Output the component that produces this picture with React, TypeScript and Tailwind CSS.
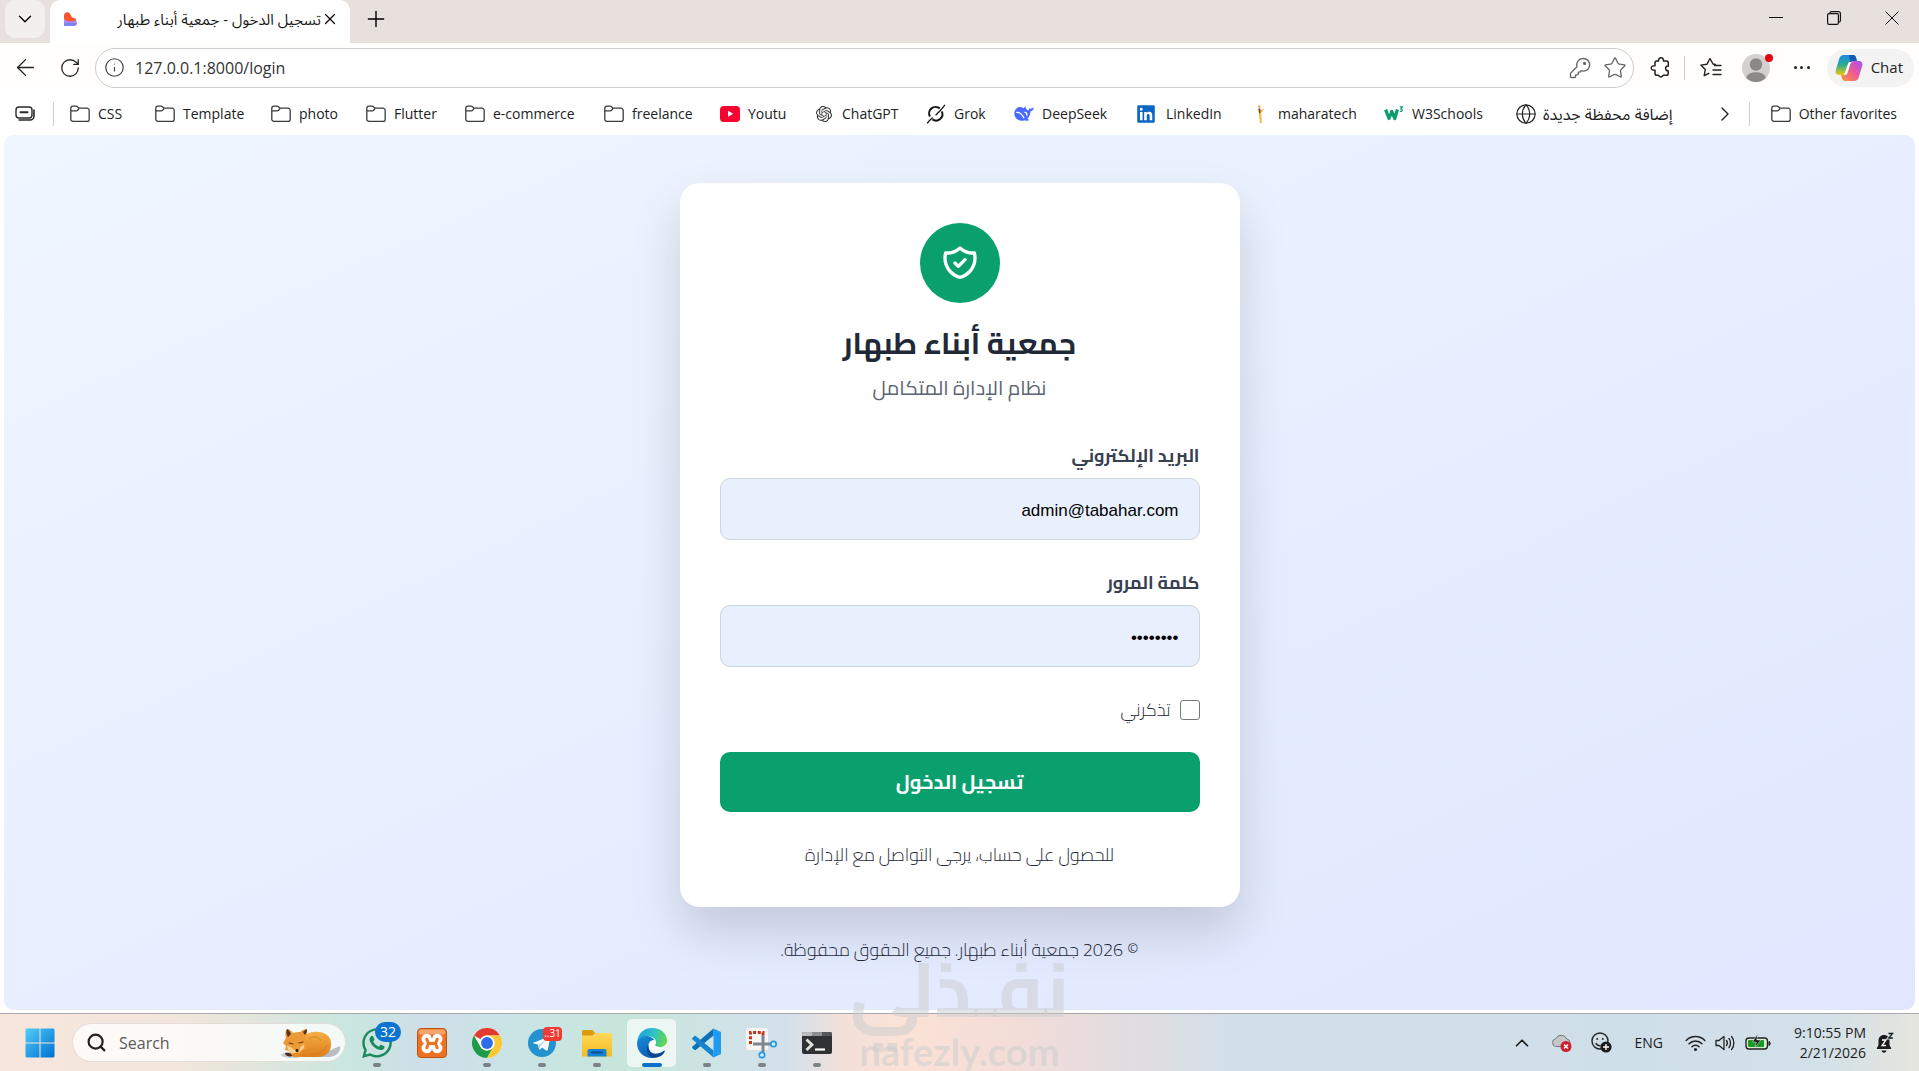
import type { ReactNode } from "react";
import {
  LuArrowLeft,
  LuChevronDown,
  LuChevronRight,
  LuChevronUp,
  LuGlobe,
  LuInfo,
  LuPlus,
  LuRotateCw,
  LuSearch,
  LuStar,
  LuX,
} from "react-icons/lu";
import { SiOpenai } from "react-icons/si";
import { FaLinkedin, FaWhatsapp } from "react-icons/fa";

const UI = "font-['Open_Sans','Noto_Sans_Arabic',sans-serif]";
const CAIRO = "font-['Cairo','Noto_Sans_Arabic',sans-serif]";

/* ---------- bookmark icons ---------- */

function Folder() {
  return (
    <svg width="20" height="20" viewBox="0 0 20 20" fill="none" stroke="#3a3a3a" strokeWidth="1.3" strokeLinejoin="round">
      <path d="M.8 4.2A2 2 0 0 1 2.8 2.2h3.3c.5 0 1 .2 1.4.6L9 4.2h8a2.2 2.2 0 0 1 2.2 2.2v8.8a2.2 2.2 0 0 1-2.2 2.2H3a2.2 2.2 0 0 1-2.2-2.2z" />
      <path d="M.8 6.8h5.4c.5 0 1-.2 1.4-.6l1.6-1.8" />
    </svg>
  );
}

function Youtube() {
  return (
    <svg width="20" height="20" viewBox="0 0 20 20">
      <rect y="2" width="20" height="16" rx="3.8" fill="#f8032f" />
      <path d="M8 6.8v6l5.2-3z" fill="#fff" />
    </svg>
  );
}

function Grok() {
  return (
    <svg width="20" height="20" viewBox="0 0 20 20" fill="none" stroke="#151515" strokeWidth="2">
      <path d="M13.8 4.6A6.4 6.4 0 0 0 4 12.6" />
      <path d="M6.4 15.4A6.4 6.4 0 0 0 15.8 7.4" />
      <path d="M19 .8c-2.6 3.4-5.2 6.8-9.4 10.4M6.6 13.4C4 15.8 2.4 17.4 1.2 19.4" strokeWidth="1.3" />
    </svg>
  );
}

function DeepSeek() {
  return (
    <svg width="20" height="20" viewBox="0 0 20 20">
      <path
        d="M.3 9.600C.2 5.500 3 2.800 6.800 3c1.200.1 2 .6 3 1.200.6-.7.9-1.200 1.900-1.600-.2 1.600.6 2.900 2 3.700 1.200.5 1.200-1.100 1.900-2.200.4.9 1.100.7 1.800.4.8-.3 1.400-.8 2.400-.9-.2 2.200-1.400 3.500-3.300 4-.2 3.400-1.200 5.400-3 7.100.5.6 1.300.9 2.100 1.400-1.900 1-3.800.9-5.200.2C5.200 18.200.4 14.800.3 9.600z"
        fill="#4d6bfe"
      />
      <path d="M2.800 8.400c3.400-.4 5.400 2.200 7 5.200M11 8.400c1.400.2 2 1.200 1.900 2.600" stroke="#fff" strokeWidth="1.300" fill="none" strokeLinecap="round" />
    </svg>
  );
}

function Mahara() {
  return (
    <svg width="20" height="20" viewBox="0 0 20 20">
      <path d="M8.600 5.800c2 .2 4-.1 5.400-1.400-.6 2-1.600 3.200-2.800 3.800l.6 10.800H10z" fill="#f2b43c" />
      <path d="M8.400 4.400h1.900v4.600H9z" fill="#6b3f1d" />
      <circle cx="9.400" cy="2.500" r="1.200" fill="#e9a13b" />
    </svg>
  );
}

function W3() {
  return (
    <svg width="20" height="20" viewBox="0 0 20 20" fill="none">
      <path d="M1.600 5.600 5 14.500l2.800-7 3 7 2.600-9" stroke="#0c9d6c" strokeWidth="3.200" strokeLinejoin="round" />
      <path d="M15.800 2.800h2.600l-1.500 2c2 .2 1.900 3-.9 2.500" stroke="#0c9d6c" strokeWidth="1.200" />
    </svg>
  );
}

type Bookmark = { label: string; width: string; icon: ReactNode };

const bookmarks: Bookmark[] = [
  { label: "CSS", width: "w-[85px]", icon: <Folder /> },
  { label: "Template", width: "w-[116px]", icon: <Folder /> },
  { label: "photo", width: "w-[95px]", icon: <Folder /> },
  { label: "Flutter", width: "w-[99px]", icon: <Folder /> },
  { label: "e-commerce", width: "w-[139px]", icon: <Folder /> },
  { label: "freelance", width: "w-[116px]", icon: <Folder /> },
  { label: "Youtu", width: "w-[94px]", icon: <Youtube /> },
  { label: "ChatGPT", width: "w-[112px]", icon: <SiOpenai className="mx-[2px] size-4 text-[#333]" /> },
  { label: "Grok", width: "w-[88px]", icon: <Grok /> },
  { label: "DeepSeek", width: "w-[122px]", icon: <DeepSeek /> },
  { label: "LinkedIn", width: "w-[114px]", icon: <FaLinkedin className="mr-[2px] size-5 text-[#0a66c2]" /> },
  { label: "maharatech", width: "w-[134px]", icon: <Mahara /> },
  { label: "W3Schools", width: "w-[131px]", icon: <W3 /> },
];

/* ---------- browser chrome ---------- */

function TabStrip() {
  return (
    <header className="flex h-[43px] items-start bg-[#e8e0dd]">
      <button aria-label="Tab actions" className="ml-[5px] flex h-[38px] w-10 items-center justify-center rounded-[10px] bg-[#f3efed]">
        <LuChevronDown className="size-[22px]" strokeWidth={1.5} />
      </button>
      <div className="ml-[5px] flex h-[43px] w-[300px] items-center rounded-t-[10px] bg-white pr-[11px] pb-[5px] pl-[13px]">
        <svg width="16" height="16" viewBox="0 0 16 16">
          <path d="M1 8.500h10.500a3.400 3.400 0 0 1 0 6.500H1z" fill="#a78bfa" />
          <path d="M1 12h13c-.5 1.800-1.500 3-3.500 3H1z" fill="#7c83f5" />
          <path d="M1 4.500A3.300 3.300 0 0 1 7.300 3.200L9 6.500c2 .3 4 1 4.600 2.800C9.500 11 3 10.500 1 8z" fill="#f9532d" />
        </svg>
        <span dir="rtl" className="flex-1 truncate text-right text-[15px] leading-6 text-[#1b1b1b]">
          تسجيل الدخول - جمعية أبناء طبهار
        </span>
        <button aria-label="Close tab">
          <LuX className="size-[18px]" strokeWidth={1.6} />
        </button>
      </div>
      <button aria-label="New tab" className="ml-3 flex h-[38px] w-7 items-center justify-center">
        <LuPlus className="size-[26px] shrink-0" strokeWidth={1.3} />
      </button>
      <div className="ml-auto flex h-[35px] items-center gap-11 pr-5">
        <button aria-label="Minimize">
          <svg width="14" height="14" viewBox="0 0 14 14" stroke="#111" fill="none">
            <path d="M0 6.500h14" />
          </svg>
        </button>
        <button aria-label="Restore">
          <svg width="14" height="14" viewBox="0 0 14 14" stroke="#111" fill="none" strokeWidth="1.200">
            <rect x=".6" y="2.600" width="10.800" height="10.800" rx="1.500" />
            <path d="M3 2.600V2A1.400 1.400 0 0 1 4.400.6h7A2 2 0 0 1 13.400 2.600v7A1.400 1.400 0 0 1 12 11" />
          </svg>
        </button>
        <button aria-label="Close">
          <svg width="14" height="14" viewBox="0 0 14 14" stroke="#111" fill="none">
            <path d="m.5.5 13 13m0-13-13 13" />
          </svg>
        </button>
      </div>
    </header>
  );
}

function Toolbar() {
  return (
    <nav className="flex h-[49px] items-center bg-[#fffefd] pr-[5px] pl-3">
      <button aria-label="Back">
        <LuArrowLeft className="size-[27px] text-[#222]" strokeWidth={1.2} />
      </button>
      <button aria-label="Reload" className="ml-5">
        <LuRotateCw className="size-[22px] text-[#222]" strokeWidth={1.4} />
      </button>
      <div className="ml-[14px] flex h-10 flex-1 items-center rounded-full border border-[#cfcccb] bg-white pr-[6px] pl-2">
        <LuInfo className="size-[21px] text-[#444]" strokeWidth={1.4} />
        <input
          aria-label="Address"
          defaultValue="127.0.0.1:8000/login"
          className="ml-[10px] min-w-0 flex-1 bg-transparent text-[16px] text-[#333] outline-none"
        />
        <button aria-label="Saved passwords">
          <svg width="22" height="22" viewBox="0 0 22 22" fill="none" stroke="#666" strokeWidth="1.300" strokeLinejoin="round">
            <path d="M14 1.500a6.300 6.300 0 0 0-6 8.300l-6 6c-.4.400-.6 1-.6 1.500v2.200c0 .6.500 1 1 1h3.200c.6 0 1-.4 1-1v-1.700h1.700c.6 0 1-.4 1-1v-1.600h1.400l1.500-1.500A6.300 6.300 0 1 0 14 1.500z" />
            <circle cx="15.600" cy="6.400" r=".9" fill="#666" />
          </svg>
        </button>
        <button aria-label="Add to favorites" className="ml-3">
          <LuStar className="size-6 text-[#666]" strokeWidth={1.3} />
        </button>
      </div>
      <button aria-label="Extensions" className="ml-4">
        <svg width="21" height="22" viewBox="0 0 21 22" fill="none" stroke="#222" strokeWidth="1.500" strokeLinejoin="round">
          <path d="M6.800 4h1.800a2.500 2.500 0 1 1 4.800 0h3.100c1 0 1.800.8 1.800 1.800v3.400c-3.600-.9-3.600 5-.1 4.600v2.700c0 1-.7 1.800-1.700 1.800h-3.300a2.500 2.500 0 0 1-4.700 0H6.800c-1 0-1.800-.8-1.800-1.800v-3.200c-5 .6-5-5.200 0-4.600V5.800C5 4.800 5.800 4 6.800 4z" />
        </svg>
      </button>
      <span className="ml-[13px] h-6 w-px bg-[#d0cdcc]" />
      <button aria-label="Favorites" className="ml-[15px]">
        <svg width="22" height="22" viewBox="0 0 22 22" fill="none" stroke="#222" strokeWidth="1.400" strokeLinejoin="round" strokeLinecap="round">
          <path d="M15.500 7.500 13 7l-3-5.500L7 7.200l-6.200.9 4.500 4.400-1.100 6.200 4.600-2.400M14.500 8.500h6.500M13 13h8M13 17.500h8" />
        </svg>
      </button>
      <button aria-label="Profile" className="relative ml-5">
        <svg width="28" height="28" viewBox="0 0 28 28">
          <circle cx="14" cy="14" r="14" fill="#d3d1d0" />
          <circle cx="14" cy="10.500" r="6.200" fill="#8b8987" />
          <path d="M4 23.700a10.500 7.800 0 0 1 20 0A14 14 0 0 1 14 28a14 14 0 0 1-10-4.300z" fill="#8b8987" />
        </svg>
        <span className="absolute top-0 -right-[3px] size-2 rounded-full bg-[#e3000f]" />
      </button>
      <button aria-label="Settings and more" className="ml-6 flex w-4 justify-between">
        <span className="size-[3px] rounded-full bg-[#222]" />
        <span className="size-[3px] rounded-full bg-[#222]" />
        <span className="size-[3px] rounded-full bg-[#222]" />
      </button>
      <button className="ml-[17px] flex h-[38px] items-center gap-2 rounded-full bg-[#f4f3f3] px-2 text-[15px] text-[#222]">
        <svg width="28" height="28" viewBox="0 0 28 28">
          <defs>
            <linearGradient id="cpA" x1="0" y1="0" x2="0" y2="1">
              <stop offset="0" stopColor="#1b8be8" />
              <stop offset=".5" stopColor="#2dab8e" />
              <stop offset="1" stopColor="#f2c80f" />
            </linearGradient>
            <linearGradient id="cpB" x1="1" y1="0" x2="0" y2="1">
              <stop offset="0" stopColor="#a64df5" />
              <stop offset=".5" stopColor="#ee5c93" />
              <stop offset="1" stopColor="#fb9a3c" />
            </linearGradient>
          </defs>
          <path d="M9 1h9c1.700 0 2.600 1.200 3.100 2.900L22 7h-3.500c-2 0-2.900 1-3.400 2.800L12.600 18c-.6 2-1.600 3-3.600 3H4.500C1.500 21 0 19 .8 16L4.300 4.500C5 2.300 6.500 1 9 1z" fill="url(#cpA)" />
          <path d="M14 1h4c1.700 0 2.600 1.200 3.100 2.900L22 7h-3.500c-1.500 0-2.500.6-3.100 1.900z" fill="#1558b8" />
          <path d="M19 27h-9c-1.700 0-2.600-1.200-3.100-2.900L6 21h3c2 0 3-1 3.600-3l2.500-8.200C15.600 8 16.500 7 18.500 7h5c3 0 4.500 2 3.700 5l-3.500 11.500C23 25.700 21.500 27 19 27z" fill="url(#cpB)" />
          <path d="M17.500 8h-2.600c-1 0-1.600.7-2 2L10 18.600c-.3 1-.8 1.700-1.600 2.200h1.800c1.300-.1 2-1 2.500-2.500l2.600-8.200c.4-1.200 1-2 2.200-2.100z" fill="#fff" />
        </svg>
        <span className="pr-[3px]">Chat</span>
      </button>
    </nav>
  );
}

function BookmarksBar() {
  return (
    <nav className="flex h-[43px] items-center bg-white text-[14px] whitespace-nowrap text-[#222]">
      <button aria-label="Workspaces" className="ml-[15px]">
        <svg width="20" height="18" viewBox="0 0 20 18" fill="none" stroke="#2a2a2a" strokeWidth="1.400" strokeLinecap="round">
          <rect x="1" y="2" width="16" height="11" rx="3" />
          <path d="M5.500 7.200h7" strokeWidth="2" />
          <path d="M4 15h11a4 4 0 0 0 4-4V5" strokeWidth="1.600" />
        </svg>
      </button>
      <span className="mr-4 ml-[18px] h-6 w-px bg-[#d0cdcc]" />
      {bookmarks.map((b) => (
        <a key={b.label} href="#" className={`flex shrink-0 items-center gap-2 ${b.width}`}>
          {b.icon}
          {b.label}
        </a>
      ))}
      <a href="#" className="flex shrink-0 items-center gap-[6px]">
        <LuGlobe className="size-[22px]" strokeWidth={1.3} />
        <span dir="rtl" className="text-[16px]">إضافة محفظة جديدة</span>
      </a>
      <button aria-label="More favorites" className="ml-auto">
        <LuChevronRight className="size-6" strokeWidth={1.4} />
      </button>
      <span className="mr-[21px] ml-3 h-6 w-px bg-[#d0cdcc]" />
      <a href="#" className="mr-[22px] flex shrink-0 items-center gap-2">
        <Folder />
        Other favorites
      </a>
    </nav>
  );
}

/* ---------- login page ---------- */

function LoginPage() {
  const field =
    "h-[62px] w-full rounded-[10px] border border-[#cdd3df] bg-[#e8f0fe] px-5 pt-[3px] text-right font-['Liberation_Sans',sans-serif] text-[17px] text-black outline-none";
  const label = "block text-[18px] leading-[26px] font-bold text-[#374151]";
  return (
    <main
      dir="rtl"
      className={`mx-1 flex flex-1 flex-col items-center overflow-hidden rounded-[10px] bg-linear-to-br from-[#eff6ff] to-[#e0e7ff] pt-12 ${CAIRO}`}
    >
      <section className="w-[560px] rounded-[20px] bg-white p-10 shadow-[0_25px_50px_rgba(0,0,0,0.15)]">
        <div className="mx-auto flex size-20 items-center justify-center rounded-full bg-[#0aa06e]">
          <svg width="40" height="40" viewBox="0 0 24 24" fill="none" stroke="#fff" strokeWidth="2" strokeLinecap="round" strokeLinejoin="round">
            <path d="M9 12l2 2 4-4m5.618-4.016A11.955 11.955 0 0112 2.944a11.955 11.955 0 01-8.618 3.040A12.020 12.020 0 003 9c0 5.591 3.824 10.290 9 11.622 5.176-1.332 9-6.030 9-11.622 0-1.042-.133-2.052-.382-3.016z" />
          </svg>
        </div>
        <h1 className="mt-4 text-center text-[30px] leading-[48px] font-bold text-[#1f2937]">جمعية أبناء طبهار</h1>
        <p className="mt-[5px] text-center text-[20px] leading-8 text-[#5b6472]">نظام الإدارة المتكامل</p>
        <form className="mt-[39px]" onSubmit={(e) => e.preventDefault()}>
          <label htmlFor="email" className={label}>
            البريد الإلكتروني
          </label>
          <input id="email" type="email" defaultValue="admin@tabahar.com" className={`mt-[9px] ${field}`} />
          <label htmlFor="password" className={`mt-[30px] ${label}`}>
            كلمة المرور
          </label>
          <input id="password" type="password" defaultValue="password" className={`mt-[9px] ${field}`} />
          <label className="mt-[30px] flex items-center gap-[9px] text-[18px] leading-[26px] font-[350] text-[#1f2937]">
            <input type="checkbox" className="size-5 appearance-none rounded-[3px] border border-[#767676] bg-white" />
            تذكرني
          </label>
          <button className="mt-[29px] block h-[60px] w-full rounded-[10px] bg-[#0aa06e] text-[20px] font-bold text-white">
            تسجيل الدخول
          </button>
        </form>
        <p className="mt-[30px] -mb-px text-center text-[18px] leading-[26px] font-[350] text-[#1f2937]">
          للحصول على حساب، يرجى التواصل مع الإدارة
        </p>
      </section>
      <p className="mt-[30px] text-[18px] leading-[26px] font-[350] text-[#1f2937]">© 2026 جمعية أبناء طبهار. جميع الحقوق محفوظة.</p>
    </main>
  );
}

/* ---------- taskbar ---------- */

function WindowsLogo() {
  return (
    <svg width="30" height="30" viewBox="0 0 30 30">
      <defs>
        <linearGradient id="win" x1="0" y1="0" x2="1" y2="1">
          <stop offset="0" stopColor="#52ccfb" />
          <stop offset="1" stopColor="#0070cf" />
        </linearGradient>
      </defs>
      <path d="M1.500.5h13v14H.5v-13zM15.500.5h13l1 1v13h-14zM.5 15.500h14v14h-13l-1-1zM15.500 15.500h14v13l-1 1h-13z" fill="url(#win)" />
    </svg>
  );
}

function Fox() {
  return (
    <svg width="60" height="34" viewBox="0 0 60 34">
      <defs>
        <linearGradient id="fox" x1="0" y1="0" x2="0" y2="1">
          <stop offset="0" stopColor="#f5ad45" />
          <stop offset="1" stopColor="#dd7f1c" />
        </linearGradient>
      </defs>
      <path d="M34 31 59 20c1 4-2 10-11 11z" fill="#8f95a3" opacity=".6" />
      <ellipse cx="12" cy="29" rx="12" ry="3" fill="#aab0ba" opacity=".6" />
      <path d="M18 14C23 8 31 5 38 6c9 1 13 7 12 14-1 7-6 11-14 11H18c-7 0-7-9 0-17z" fill="url(#fox)" />
      <path d="M28 13c6-4 10-2 12 2M30 28c8 1 14-3 16-9" stroke="#c96f17" strokeWidth="1" fill="none" opacity=".6" />
      <path d="M6 3c3 0 4 2 6 4 3-1 5-1 7-1 3-2 4-3 7-3 0 4 0 6-2 9l3 6-2 1 0 4-4 1-2 4-4-1-4 2-3-4-4-1 1-4-3-3 3-5C4 8 4 6 6 3z" fill="#ec9a35" />
      <path d="M6 3c2 1 3 3 4 5l-3 3C5 8 5 5 6 3zM26 3c-2 1-3 2-4 3l2 3c2-2 2-4 2-6z" fill="#5a341c" />
      <path d="M6 20c3 0 5 2 10 6-4 3-9 1-10-6zM19 22l4-4c1 3-1 6-5 8z" fill="#f9d08f" />
      <path d="m8 17 4 1m6-1 4-1" stroke="#6b3c14" strokeWidth="1.100" strokeLinecap="round" />
      <circle cx="16" cy="24.500" r="1.400" fill="#2b1609" />
      <path d="M4 27c4-1 6 0 8 3-4 1-8 0-8-3z" fill="#4a2b1c" />
      <path d="M10 28c5-1 9 1 13 3H12z" fill="#e68d2a" />
    </svg>
  );
}

function Xampp() {
  return (
    <svg width="30" height="30" viewBox="0 0 30 30">
      <rect x=".5" y=".5" width="29" height="29" rx="3.500" fill="#ef7122" stroke="#b95414" />
      <rect x="1.500" y="1.500" width="27" height="5" rx="2.500" fill="#f6a56c" />
      <g fill="#fff">
        <circle cx="9.800" cy="11" r="5.300" />
        <circle cx="20.200" cy="11" r="5.300" />
        <circle cx="9.800" cy="20" r="5.300" />
        <circle cx="20.200" cy="20" r="5.300" />
        <path d="M7 11h16l-1.500 4.500L23 20v3H7v-3l1.500-4.500z" />
      </g>
      <path d="M9.800 11.200 11.500 15.500 9.800 19.800M20.200 11.200 18.500 15.500 20.200 19.800M11.500 15.500h7" stroke="#ef7122" strokeWidth="3" strokeLinecap="round" strokeLinejoin="round" fill="none" />
      <path d="M13.600 6.500h2.800L15 11zM13.600 25.500h2.800L15 21z" fill="#ef7122" />
    </svg>
  );
}

function Chrome() {
  return (
    <svg width="30" height="30" viewBox="0 0 48 48">
      <circle cx="24" cy="24" r="24" fill="#fff" />
      <path d="M3.200 12A24 24 0 0 1 44.800 12H24a12 12 0 0 0-10.400 6z" fill="#e33b2e" />
      <path d="M3.200 12A24 24 0 0 0 24 48l10.400-18a12 12 0 0 1-20.800 0z" fill="#1e9a48" />
      <path d="M44.800 12A24 24 0 0 1 24 48l10.400-18A12 12 0 0 0 34.400 18L24 12z" fill="#fcc934" />
      <circle cx="24" cy="24" r="12" fill="#fff" />
      <circle cx="24" cy="24" r="9.500" fill="#2b6fe8" />
    </svg>
  );
}

function Telegram() {
  return (
    <svg width="28" height="28" viewBox="0 0 28 28">
      <circle cx="14" cy="14" r="14" fill="#2393cf" />
      <path d="M5.500 13.800 21 7.600c.8-.3 1.400.2 1.200 1.200l-2.500 12c-.2.900-.9 1-1.600.6l-4-3-2 2c-.4.400-.9.300-1-.3l-1.300-4.500-4-1.200c-.9-.3-.9-.8-.3-1.100z" fill="#fff" />
      <path d="m10.500 16 7.700-5.500-6 6.600-.5 3z" fill="#a9cfe5" />
    </svg>
  );
}

function Explorer() {
  return (
    <svg width="30" height="28" viewBox="0 0 30 28">
      <defs>
        <linearGradient id="fold" x1="0" y1="0" x2="0" y2="1">
          <stop offset="0" stopColor="#ffd95a" />
          <stop offset="1" stopColor="#f5b921" />
        </linearGradient>
      </defs>
      <path d="M1.500 1h8c.8 0 1.300.2 1.800.8L13 4h15v8H0V2.500C0 1.600.6 1 1.500 1z" fill="#dc9b0c" />
      <path d="M0 6.500h10.500L13 4h15.500A1.500 1.500 0 0 1 30 5.500V26a1.500 1.500 0 0 1-1.500 1.500h-27A1.500 1.500 0 0 1 0 26z" fill="url(#fold)" />
      <path d="M5.500 27.500V22a2 2 0 0 1 2-2h15a2 2 0 0 1 2 2v5.500z" fill="#1583d6" />
      <rect x="9" y="22.500" width="12" height="2" rx="1" fill="#0b4f94" />
    </svg>
  );
}

function Edge() {
  return (
    <svg width="30" height="30" viewBox="0 0 30 30">
      <defs>
        <linearGradient id="eg1" x1="0" y1=".3" x2="1" y2=".5">
          <stop offset="0" stopColor="#1b9de2" />
          <stop offset=".5" stopColor="#2cc0c8" />
          <stop offset="1" stopColor="#62d84f" />
        </linearGradient>
        <linearGradient id="eg2" x1="0" y1="0" x2=".6" y2="1">
          <stop offset="0" stopColor="#1590dd" />
          <stop offset="1" stopColor="#0b5cae" />
        </linearGradient>
      </defs>
      <path d="M1 10C3.500 3 9 0 15 0c9 0 15 6 15 12.500 0 4-3 6.500-7 6.500-3 0-5-1-5-2 0-.8 1-1.200 1-3C19 11 16 8.500 12 8.500 7 8.500 2.500 11 .2 14z" fill="url(#eg1)" />
      <path d="M0 15C1 10.500 6 7.500 11 8.200c3 .4 5.500 2 6.500 4.300-3-1-6 1.500-6 5.500 0 5 4 9.500 8.500 10.800-2 .8-3.500 1.200-5 1.200C6.500 30 0 23.500 0 15z" fill="url(#eg2)" />
      <path d="M11.500 16c-1.500 6.500 3.500 10.500 9 9.500 2.500-.4 5-1.500 6.500-2.700.6-.4 1.100.1.800.8C26 27.500 22 30 17.500 29.600 11 29 8 22.500 11.500 16z" fill="#0c4594" />
      <path d="M17.500 12.500c-3-.5-5.800 2-5.800 5 1.500 4.500 6 5.500 10 4 1.500-.5 1.500-2-.2-2.600-2.500-.4-3.700-1.200-3.500-2 .2-.8 1-1.200 1-2.500 0-.8-.6-1.600-1.500-1.900z" fill="#fff" />
    </svg>
  );
}

function VsCode() {
  return (
    <svg width="30" height="30" viewBox="0 0 30 30">
      <path d="M21.500.5 29 4v22l-7.500 3.500z" fill="#1f9cf0" />
      <path d="M21.500.5v7L4 21.800c-.6.5-1.200.5-1.800 0L.5 20.200c-.6-.6-.6-1.200 0-1.800z" fill="#0a70b8" />
      <path d="M21.500 29.500v-7L4 8.200c-.6-.5-1.200-.5-1.800 0L.5 9.800c-.6.600-.6 1.200 0 1.800z" fill="#1585cf" />
    </svg>
  );
}

function Snip() {
  return (
    <svg width="32" height="32" viewBox="0 0 32 32">
      <rect x="0" y="1" width="22" height="22" rx="2" fill="#f8f5f2" />
      <path d="M4.500 17V5.500h12.500V10" fill="none" stroke="#c4361c" strokeWidth="3" strokeDasharray="3 1.700" />
      <path d="M17 8v17M7 17h18" stroke="#7c8791" strokeWidth="3" />
      <circle cx="16" cy="28" r="2.700" fill="#d9eefb" stroke="#2897e3" strokeWidth="1.700" />
      <circle cx="27.500" cy="17" r="2.700" fill="#d9eefb" stroke="#2897e3" strokeWidth="1.700" />
    </svg>
  );
}

function Terminal() {
  return (
    <svg width="30" height="24" viewBox="0 0 30 24">
      <rect y="1" width="30" height="22" rx="2" fill="#2f3133" />
      <path d="M0 5V3a2 2 0 0 1 2-2h8v4z" fill="#b9bcbe" />
      <path d="M10 1h10v4H10z" fill="#8d9092" />
      <path d="M20 1h8a2 2 0 0 1 2 2v2H20z" fill="#55585a" />
      <path d="m4.500 8.500 5.500 5.300-5.500 5.200" stroke="#e4e4e4" strokeWidth="2.800" fill="none" />
      <path d="M13 18.500h10" stroke="#fff" strokeWidth="2.200" />
    </svg>
  );
}

type TaskApp = { name: string; icon: ReactNode; state: "open" | "active" | "none" };

const apps: TaskApp[] = [
  {
    name: "WhatsApp",
    state: "open",
    icon: (
      <>
        <FaWhatsapp className="size-[34px] text-[#1b8a5e]" />
        <span className="absolute top-[3px] left-[23px] flex h-5 w-[26px] items-center justify-center rounded-full bg-[#0b74d1] text-[14px] text-white">
          32
        </span>
      </>
    ),
  },
  { name: "XAMPP", state: "none", icon: <Xampp /> },
  { name: "Chrome", state: "open", icon: <Chrome /> },
  {
    name: "Telegram",
    state: "open",
    icon: (
      <>
        <Telegram />
        <span className="absolute top-2 left-[26px] flex h-[14px] w-[19px] items-center justify-center rounded-[4px] bg-[#f03a35] text-[10px] text-white">
          ..31
        </span>
      </>
    ),
  },
  { name: "File Explorer", state: "open", icon: <Explorer /> },
  { name: "Edge", state: "active", icon: <Edge /> },
  { name: "VS Code", state: "open", icon: <VsCode /> },
  { name: "Snipping Tool", state: "open", icon: <Snip /> },
  { name: "Terminal", state: "open", icon: <Terminal /> },
];

const indicator = {
  open: "h-1 w-2 rounded-full bg-[#7d8288]",
  active: "h-1 w-5 rounded-full bg-[#0b6fcb]",
  none: "h-1 w-2",
};

function Taskbar() {
  return (
    <footer className="flex h-[58px] items-center border-t border-[#a9a9ab] bg-[linear-gradient(90deg,#f7e6dc_0%,#f3e6dc_9%,#e3e6dc_13%,#c9e6df_18%,#cfdfe8_22%,#c8e5e4_28%,#c8e5da_33%,#cfe3e6_38%,#d3e0ec_41%,#f3e0da_44%,#fbe2d6_47%,#f3ddd8_53%,#e4dcdf_58%,#d3dfe8_64%,#cfdfe9_85%,#d3e0e8_95%,#e5e6de_100%)]">
      <button aria-label="Start" className="ml-[25px]">
        <WindowsLogo />
      </button>
      <div className="ml-[17px] flex h-[39px] w-[274px] items-center rounded-full border border-[#e3dcd8] bg-white/75 pr-1 pl-[13px]">
        <LuSearch className="size-[21px] text-[#222]" strokeWidth={2.5} />
        <input aria-label="Search" placeholder="Search" className="ml-3 w-[120px] bg-transparent text-[16px] placeholder:text-[#5a5a5a]" />
        <span className="ml-auto">
          <Fox />
        </span>
      </div>
      <div className="ml-[3px] flex">
        {apps.map((a) => (
          <button
            key={a.name}
            aria-label={a.name}
            className={`mx-[3px] flex h-[48px] w-[49px] flex-col items-center justify-between rounded-[5px] ${a.state === "active" ? "bg-white/65" : ""}`}
          >
            <span className="relative flex w-[49px] flex-1 items-center justify-center pt-1">{a.icon}</span>
            <span className={indicator[a.state]} />
          </button>
        ))}
      </div>
      <div className="ml-auto flex items-center text-[15px] text-[#1c1c1c]">
        <button aria-label="Show hidden icons">
          <LuChevronUp className="size-[22px]" strokeWidth={1.8} />
        </button>
        <button aria-label="OneDrive" className="ml-[18px]">
          <svg width="21" height="20" viewBox="0 0 21 20">
            <path d="M4.500 13.500a4 4 0 0 1 .3-7.800A6 6 0 0 1 15.800 6a4 4 0 0 1 1.200 7.500z" fill="#c6c6c6" stroke="#777" />
            <circle cx="15" cy="13.500" r="5.500" fill="#cf1f2e" />
            <path d="m13 11.500 4 4m0-4-4 4" stroke="#fff" strokeWidth="1.500" />
          </svg>
        </button>
        <button aria-label="Emoji" className="ml-[19px]">
          <svg width="21" height="21" viewBox="0 0 21 21" fill="none" stroke="#222" strokeWidth="1.400">
            <circle cx="9" cy="9" r="8" />
            <path d="M5 11.500c1 1.500 2.200 2.200 4 2.200" strokeLinecap="round" />
            <circle cx="6.200" cy="7" r=".9" fill="#222" stroke="none" />
            <circle cx="11.800" cy="7" r=".9" fill="#222" stroke="none" />
            <circle cx="15" cy="15" r="5.600" fill="#1c1c1c" stroke="none" />
            <path d="M15 12v6m-3-3h6" stroke="#fff" />
          </svg>
        </button>
        <span className="ml-[23px] text-[14px]">ENG</span>
        <button aria-label="Network, volume and battery" className="ml-[22px] flex items-center gap-[9px]">
          <svg width="21" height="18" viewBox="0 0 21 18" fill="none" stroke="#222" strokeWidth="1.500" strokeLinecap="round">
            <path d="M1.200 6.500a13 13 0 0 1 18.600 0M4 9.700a9 9 0 0 1 13 0M6.900 12.700a5 5 0 0 1 7.200 0" />
            <circle cx="10.500" cy="15.500" r="1.600" fill="#222" stroke="none" />
          </svg>
          <svg width="21" height="18" viewBox="0 0 21 18" fill="none" stroke="#222" strokeWidth="1.300" strokeLinecap="round" strokeLinejoin="round">
            <path d="M1 6.500v5h3l5 4v-13l-5 4zM11.500 6.500c1 1.300 1 3.700 0 5M14 4.500c2 2.500 2 6.500 0 9M16.600 2.500c3 3.800 3 9.200 0 13" />
          </svg>
          <svg width="26" height="18" viewBox="0 0 26 18">
            <rect x="1" y="4" width="21.500" height="11" rx="3" fill="#d9efd5" stroke="#222" strokeWidth="1.400" />
            <rect x="3" y="6" width="16" height="7" rx="1" fill="#1a9a1f" />
            <path d="M24 7.500c1.500 0 1.500 4 0 4z" fill="#222" stroke="#222" />
            <path d="M12.500 0 7.500 8h3.800L10 13.500 15.800 6h-4z" fill="#111" stroke="#d3e0e8" strokeWidth=".6" />
          </svg>
        </button>
        <div className="ml-[20px] w-[75px] text-right text-[14px] leading-5 whitespace-nowrap">
          <p>9:10:55 PM</p>
          <p>2/21/2026</p>
        </div>
        <button aria-label="Notifications" className="mr-[25px] ml-[10px]">
          <svg width="18" height="22" viewBox="0 0 18 22">
            <path d="M8 3C4.500 3 2.500 5.500 2.500 8.500V13L.8 16.200c-.2.500 0 .8.500.8h13.400c.5 0 .7-.3.5-.8L13.500 13V8.500C13.500 5.500 11.500 3 8 3zM5.500 18.500h5c-.3 1.400-1.200 2.200-2.500 2.200s-2.200-.8-2.500-2.200z" fill="#1c1c1c" />
            <path d="M6 8h4l-4 5.500h4" stroke="#fff" strokeWidth="1.300" fill="none" />
            <path d="M12.500 1.500h4L12.800 6h4" stroke="#d3e0e8" strokeWidth="3" fill="none" />
            <path d="M12.500 1.500h4L12.800 6h4" stroke="#1c1c1c" strokeWidth="1.300" fill="none" />
          </svg>
        </button>
      </div>
    </footer>
  );
}

export default function App() {
  return (
    <div className={`relative flex min-h-screen flex-col bg-white ${UI}`}>
      <TabStrip />
      <Toolbar />
      <BookmarksBar />
      <LoginPage />
      <div className="h-[3px] shrink-0" />
      <Taskbar />
      <div className="pointer-events-none absolute bottom-1 left-1/2 flex -translate-x-1/2 flex-col items-center font-['Cairo',sans-serif] whitespace-nowrap text-[#c9cccd]/50">
        <span dir="rtl" className="text-[76px] leading-[92px] font-bold">نفـذلي</span>
        <span className="font-['Lato',sans-serif] text-[38px] leading-[32px] font-bold">nafezly.com</span>
      </div>
    </div>
  );
}
